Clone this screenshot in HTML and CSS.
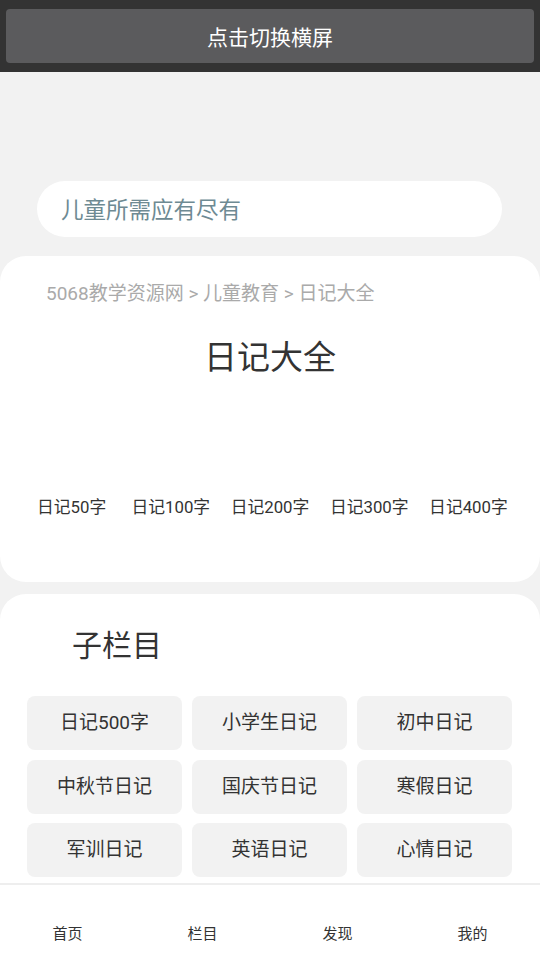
FILE: index.html
```html
<!DOCTYPE html>
<html lang="zh">
<head>
<meta charset="utf-8">
<title>日记大全</title>
<link rel="stylesheet" href="styles.css">
</head>
<body>
<header class="topbar">
  <div class="rotate-btn">点击切换横屏</div>
</header>
<main class="page">
  <div class="search">儿童所需应有尽有</div>
  <section class="card card-main">
    <div class="crumb">5068教学资源网 &gt; 儿童教育 &gt; 日记大全</div>
    <h1 class="title">日记大全</h1>
    <nav class="links">
      <a>日记50字</a>
      <a>日记100字</a>
      <a>日记200字</a>
      <a>日记300字</a>
      <a>日记400字</a>
    </nav>
  </section>
  <section class="card card-sub">
    <h2 class="sub-title">子栏目</h2>
    <div class="grid">
      <a class="cell">日记500字</a>
      <a class="cell">小学生日记</a>
      <a class="cell">初中日记</a>
      <a class="cell">中秋节日记</a>
      <a class="cell">国庆节日记</a>
      <a class="cell">寒假日记</a>
      <a class="cell">军训日记</a>
      <a class="cell">英语日记</a>
      <a class="cell">心情日记</a>
    </div>
  </section>
</main>
<footer class="tabbar">
  <a class="tab">首页</a>
  <a class="tab">栏目</a>
  <a class="tab">发现</a>
  <a class="tab">我的</a>
</footer>
</body>
</html>
```
FILE: styles.css
```css
* { box-sizing: border-box; }
html, body {
  margin: 0;
  padding: 0;
  background: #f2f2f2;
  font-family: Roboto, "Noto Sans CJK SC", sans-serif;
  color: #333;
}
.topbar {
  background: #333333;
  padding: 9px 6px;
}
.rotate-btn {
  height: 54px;
  background: #5b5b5d;
  border-radius: 4px;
  color: #fff;
  font-size: 21px;
  display: flex;
  align-items: center;
  justify-content: center;
  padding-bottom: 1px;
}
.page {
  padding-top: 109px;
  padding-bottom: 120px;
}
.search {
  margin: 0 38px 0 37px;
  height: 56px;
  border-radius: 28px;
  background: #fff;
  padding-left: 24px;
  padding-bottom: 3px;
  display: flex;
  align-items: center;
  font-size: 22.5px;
  color: #6e8a93;
}
.card {
  background: #fff;
  border-radius: 26px;
}
.card-main {
  margin-top: 19px;
  height: 326px;
  padding-top: 25px;
}
.crumb {
  padding-left: 46px;
  font-size: 19px;
  line-height: 25px;
  color: #aaaaaa;
}
.title {
  margin: 30px 0 0;
  text-align: center;
  font-size: 33px;
  line-height: 44px;
  font-weight: normal;
  color: #333;
}
.links {
  margin-top: 116px;
  padding: 0 22px;
  display: flex;
}
.links a {
  flex: 1;
  text-align: center;
  font-size: 16.8px;
  line-height: 23px;
  color: #333;
}
.card-sub {
  margin-top: 12px;
  padding: 32px 28px 40px 27px;
}
.sub-title {
  margin: 0 0 30px;
  padding-left: 45px;
  font-size: 30px;
  line-height: 40px;
  font-weight: normal;
  color: #333;
}
.grid {
  display: grid;
  grid-template-columns: repeat(3, 1fr);
  column-gap: 10px;
  row-gap: 9.5px;
}
.cell {
  height: 54px;
  background: #f2f2f2;
  border-radius: 8px;
  display: flex;
  align-items: center;
  justify-content: center;
  padding-bottom: 5px;
  font-size: 19px;
  color: #333;
}
.tabbar {
  position: fixed;
  left: 0;
  right: 0;
  bottom: 0;
  height: 77px;
  background: #fff;
  border-top: 2px solid #eeeeee;
  display: flex;
  padding-top: 38px;
}
.tab {
  flex: 1;
  text-align: center;
  font-size: 15px;
  line-height: 22px;
  color: #333;
}
```
